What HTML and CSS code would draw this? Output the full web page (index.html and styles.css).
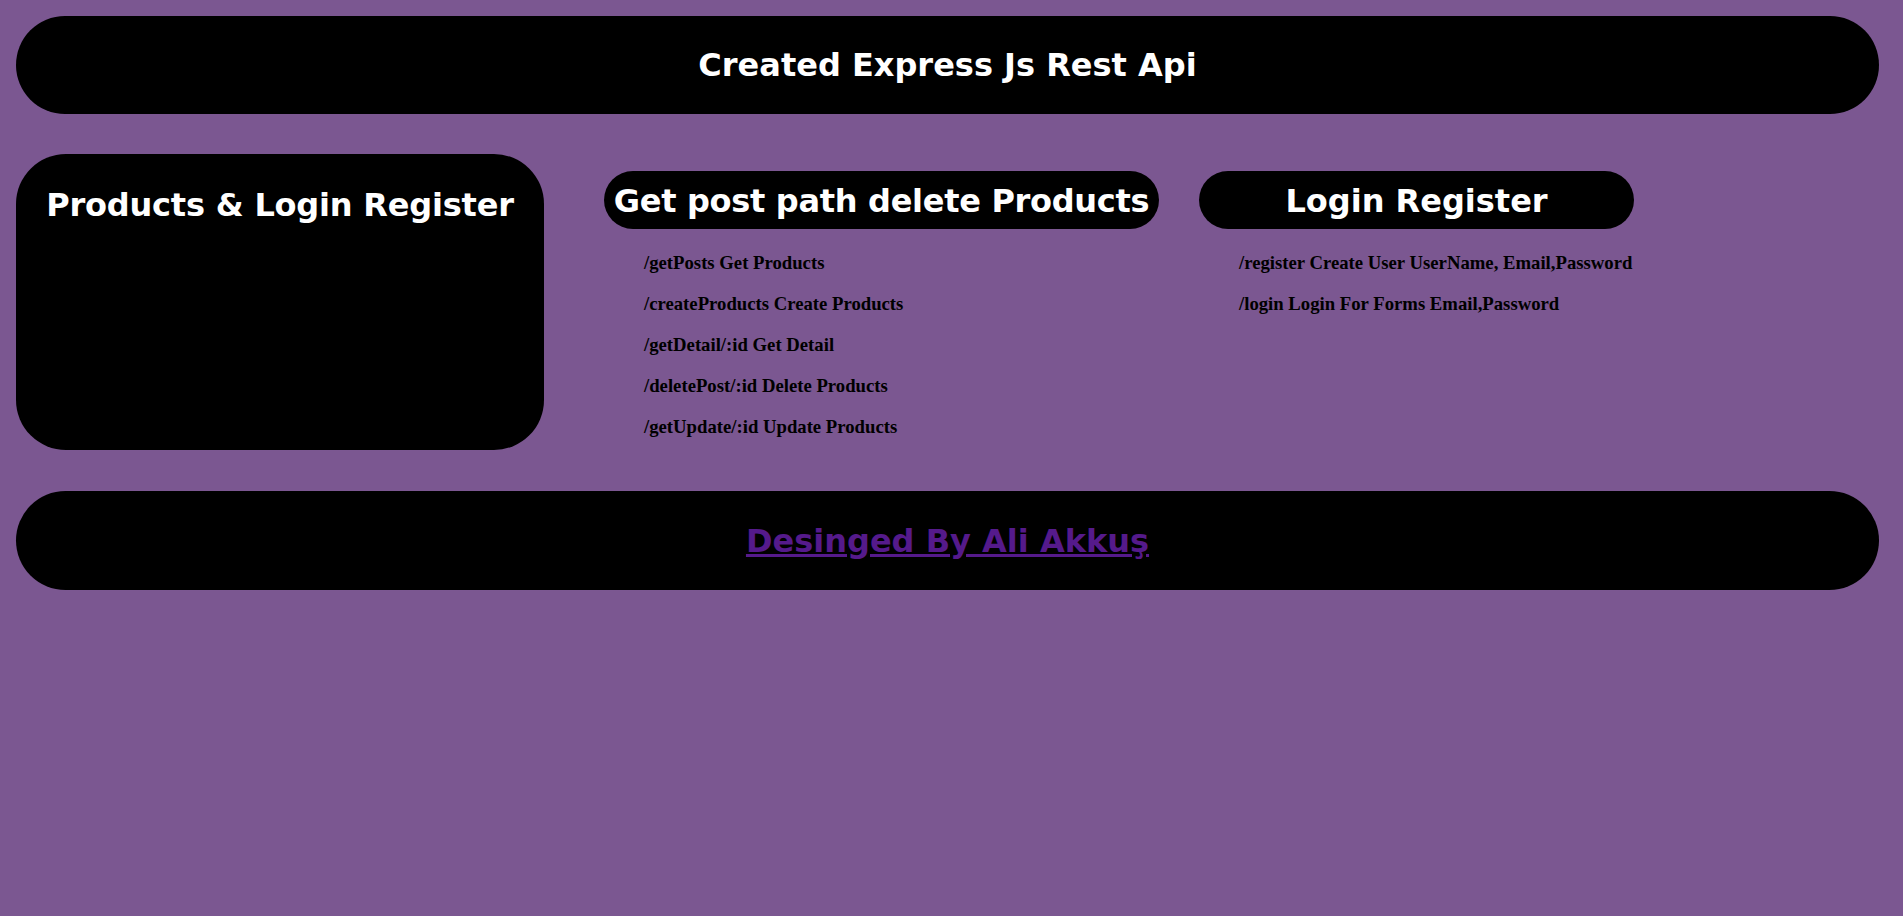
FILE: index.html
```html
<!DOCTYPE html>
<html lang="tr">
<head>
<meta charset="utf-8">
<title>Express Js Rest Api</title>
<link rel="stylesheet" href="styles.css">
</head>
<body>
<header class="header">
  <h1 class="header-title">Created Express Js Rest Api</h1>
</header>
<main class="main">
  <section class="card">
    <h2 class="card-title">Products &amp; Login Register</h2>
  </section>
  <section class="col col-mid">
    <h2 class="pill pill-mid">Get post path delete Products</h2>
    <ul class="routes">
      <li>/getPosts Get Products</li>
      <li>/createProducts Create Products</li>
      <li>/getDetail/:id Get Detail</li>
      <li>/deletePost/:id Delete Products</li>
      <li>/getUpdate/:id Update Products</li>
    </ul>
  </section>
  <section class="col col-right">
    <h2 class="pill pill-right">Login Register</h2>
    <ul class="routes">
      <li>/register Create User UserName, Email,Password</li>
      <li>/login Login For Forms Email,Password</li>
    </ul>
  </section>
</main>
<footer class="footer">
  <a class="footer-link" href="#">Desinged By Ali Akkuş</a>
</footer>
</body>
</html>
```

FILE: styles.css
```css
html, body {
  height: 100%;
}
body {
  margin: 0;
  padding: 16px 24px 0 16px;
  box-sizing: border-box;
  background: #7b5791;
  font-family: "DejaVu Sans", Verdana, sans-serif;
}
.header {
  height: 98px;
  background: #000;
  border-radius: 50px;
  display: flex;
  align-items: center;
  justify-content: center;
}
.header-title {
  margin: 0;
  color: #fff;
  font-size: 32px;
  font-weight: bold;
}
.main {
  display: flex;
  align-items: flex-start;
  margin-top: 40px;
}
.card {
  width: 528px;
  height: 296px;
  flex: none;
  box-sizing: border-box;
  padding-top: 32px;
  background: #000;
  border-radius: 50px;
  text-align: center;
}
.card-title {
  margin: 0;
  color: #fff;
  font-size: 32px;
  font-weight: bold;
  white-space: nowrap;
  letter-spacing: -0.2px;
}
.col {
  padding-top: 17px;
}
.col-mid {
  margin-left: 60px;
}
.col-right {
  margin-left: 40px;
}
.pill {
  margin: 0;
  height: 58px;
  box-sizing: border-box;
  padding: 2px 0 0;
  background: #000;
  color: #fff;
  border-radius: 30px;
  display: flex;
  align-items: center;
  justify-content: center;
  font-size: 32px;
  font-weight: bold;
  white-space: nowrap;
}
.pill-mid {
  width: 555px;
  letter-spacing: -0.3px;
}
.pill-right {
  width: 435px;
}
.routes {
  list-style: none;
  margin: 13px 0 0;
  padding: 0 0 0 40px;
  font-family: "Liberation Serif", "Times New Roman", serif;
  font-weight: bold;
  font-size: 18.72px;
  line-height: 41px;
  color: #000;
}
.footer {
  margin-top: 41px;
  height: 99px;
  background: #000;
  border-radius: 50px;
  display: flex;
  align-items: center;
  justify-content: center;
}
.footer-link {
  color: #551a8b;
  font-size: 32px;
  font-weight: bold;
  text-decoration: underline;
}
```
